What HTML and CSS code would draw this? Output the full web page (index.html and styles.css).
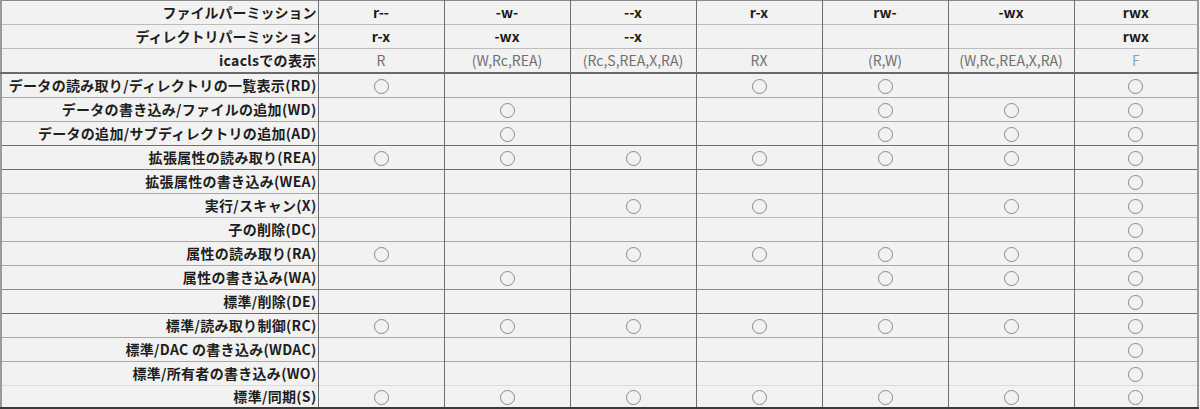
FILE: index.html
```html
<!DOCTYPE html>
<html lang="ja">
<head>
<meta charset="utf-8">
<link rel="stylesheet" href="styles.css">
</head>
<body>
<table class="perm">
  <colgroup>
    <col class="c-label"><col class="c-val"><col class="c-val"><col class="c-val"><col class="c-val"><col class="c-val"><col class="c-val"><col class="c-last">
  </colgroup>
  <tbody>
    <tr class="hd">
      <th>ファイルパーミッション</th><td>r--</td><td>-w-</td><td>--x</td><td>r-x</td><td>rw-</td><td>-wx</td><td>rwx</td>
    </tr>
    <tr class="hd b-light">
      <th>ディレクトリパーミッション</th><td>r-x</td><td>-wx</td><td>--x</td><td></td><td></td><td></td><td>rwx</td>
    </tr>
    <tr class="ic b-light">
      <th>icaclsでの表示</th><td>R</td><td>(W,Rc,REA)</td><td>(Rc,S,REA,X,RA)</td><td>RX</td><td>(R,W)</td><td>(W,Rc,REA,X,RA)</td><td class="full">F</td>
    </tr>
    <tr class="b-thick">
      <th>データの読み取り/ディレクトリの一覧表示(RD)</th><td><i class="o"></i></td><td></td><td></td><td><i class="o"></i></td><td><i class="o"></i></td><td></td><td><i class="o"></i></td>
    </tr>
    <tr class="b-mid">
      <th>データの書き込み/ファイルの追加(WD)</th><td></td><td><i class="o"></i></td><td></td><td></td><td><i class="o"></i></td><td><i class="o"></i></td><td><i class="o"></i></td>
    </tr>
    <tr class="b-mid">
      <th>データの追加/サブディレクトリの追加(AD)</th><td></td><td><i class="o"></i></td><td></td><td></td><td><i class="o"></i></td><td><i class="o"></i></td><td><i class="o"></i></td>
    </tr>
    <tr class="b-dark">
      <th>拡張属性の読み取り(REA)</th><td><i class="o"></i></td><td><i class="o"></i></td><td><i class="o"></i></td><td><i class="o"></i></td><td><i class="o"></i></td><td><i class="o"></i></td><td><i class="o"></i></td>
    </tr>
    <tr class="b-dark">
      <th>拡張属性の書き込み(WEA)</th><td></td><td></td><td></td><td></td><td></td><td></td><td><i class="o"></i></td>
    </tr>
    <tr class="b-mid">
      <th>実行/スキャン(X)</th><td></td><td></td><td><i class="o"></i></td><td><i class="o"></i></td><td></td><td><i class="o"></i></td><td><i class="o"></i></td>
    </tr>
    <tr class="b-light">
      <th>子の削除(DC)</th><td></td><td></td><td></td><td></td><td></td><td></td><td><i class="o"></i></td>
    </tr>
    <tr class="b-mid">
      <th>属性の読み取り(RA)</th><td><i class="o"></i></td><td></td><td><i class="o"></i></td><td><i class="o"></i></td><td><i class="o"></i></td><td><i class="o"></i></td><td><i class="o"></i></td>
    </tr>
    <tr class="b-mid">
      <th>属性の書き込み(WA)</th><td></td><td><i class="o"></i></td><td></td><td></td><td><i class="o"></i></td><td><i class="o"></i></td><td><i class="o"></i></td>
    </tr>
    <tr class="b-mdark">
      <th>標準/削除(DE)</th><td></td><td></td><td></td><td></td><td></td><td></td><td><i class="o"></i></td>
    </tr>
    <tr class="b-dark">
      <th>標準/読み取り制御(RC)</th><td><i class="o"></i></td><td><i class="o"></i></td><td><i class="o"></i></td><td><i class="o"></i></td><td><i class="o"></i></td><td><i class="o"></i></td><td><i class="o"></i></td>
    </tr>
    <tr class="b-mid">
      <th>標準/DAC の書き込み(WDAC)</th><td></td><td></td><td></td><td></td><td></td><td></td><td><i class="o"></i></td>
    </tr>
    <tr class="b-mid">
      <th>標準/所有者の書き込み(WO)</th><td></td><td></td><td></td><td></td><td></td><td></td><td><i class="o"></i></td>
    </tr>
    <tr class="b-faint last">
      <th>標準/同期(S)</th><td><i class="o"></i></td><td><i class="o"></i></td><td><i class="o"></i></td><td><i class="o"></i></td><td><i class="o"></i></td><td><i class="o"></i></td><td><i class="o"></i></td>
    </tr>
  </tbody>
</table>
</body>
</html>
```

FILE: styles.css
```css
html, body {
  margin: 0;
  padding: 0;
  background: #f2f2f2;
}

body {
  font-family: "Noto Sans CJK JP", "Noto Sans", sans-serif;
  font-size: 14px;
  color: #1e1e1e;
}

.perm {
  border-collapse: collapse;
  table-layout: fixed;
  width: 1199px;
  background: #f2f2f2;
  border-left: 2px solid #9a9a9a;
  border-right: 2px solid #9a9a9a;
  border-top: 1px solid #8a8a8a;
}

.c-label { width: 317px; }
.c-val { width: 126px; }
.c-last { width: 124px; }

.perm tr {
  height: 24px;
}

.perm th,
.perm td {
  padding: 0;
  height: 23px;
  line-height: 23px;
  border-left: 1px solid #6e6e6e;
  white-space: nowrap;
  overflow: hidden;
}

.perm th {
  text-align: right;
  padding-right: 1px;
  font-weight: 600;
  letter-spacing: 0.3px;
  border-left: none;
  border-right: 1px solid #6a6a6a;
}

.hd th {
  letter-spacing: 0;
}

.perm td {
  text-align: center;
}

.hd td {
  font-weight: 700;
  color: #1a1a1a;
}

.ic td {
  color: #707070;
  font-weight: 400;
}

.ic td.full {
  color: #8ea0c4;
}

.b-light th, .b-light td { border-top: 1px solid #bdbdbd; }
.b-mid th, .b-mid td { border-top: 1px solid #a8a8a8; }
.b-mdark th, .b-mdark td { border-top: 1px solid #888; }
.b-dark th, .b-dark td { border-top: 1px solid #707070; }
.b-faint th, .b-faint td { border-top: 1px solid #dcdcdc; }
.b-thick th, .b-thick td { border-top: 2px solid #6a6a6a; }

.perm tr.last {
  height: 22px;
}

.last th, .last td {
  height: 21px;
  line-height: 21px;
  border-bottom: 2px solid #3a3a3a;
}

.o {
  display: inline-block;
  width: 15px;
  height: 15px;
  box-sizing: border-box;
  border: 1px solid #8a8a8a;
  border-radius: 50%;
  vertical-align: middle;
  margin-top: -2px;
}
```
